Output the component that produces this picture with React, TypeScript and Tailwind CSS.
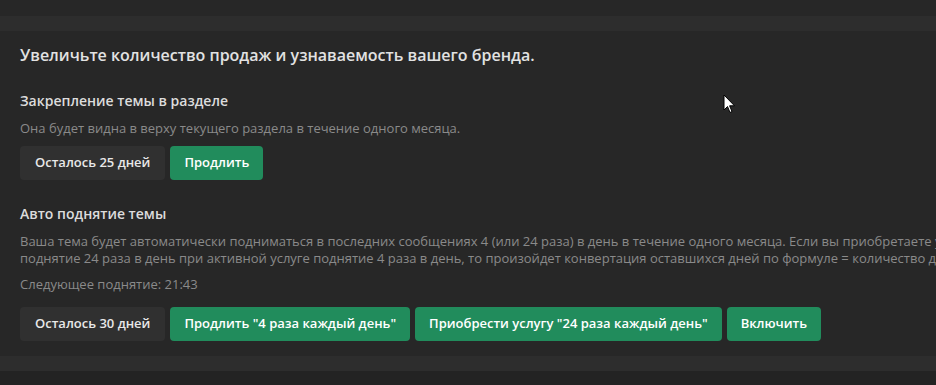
const font = { fontFamily: '"Open Sans", "Noto Sans", sans-serif' };

const GrayBtn = ({ children }: { children: React.ReactNode }) => (
  <div className="h-[34px] px-[15px] flex items-center rounded-[4px] bg-[#303030] text-[13px] font-semibold text-[#e8e8e8] whitespace-nowrap">
    {children}
  </div>
);

const GreenBtn = ({ children }: { children: React.ReactNode }) => (
  <button className="h-[34px] px-[14px] flex items-center rounded-[4px] bg-[#218c5c] text-[13px] font-semibold text-white whitespace-nowrap">
    {children}
  </button>
);

export default function App() {
  return (
    <div className="relative w-[936px] h-[385px] overflow-hidden bg-[#272727]" style={font}>
      <div className="h-[16px]" />
      <div className="h-[15px] bg-[#2d2d2d]" />

      <div className="w-[1200px] px-5 pt-[14px] pb-[15px] bg-[#272727]">
        <h2 className="h-[20px] leading-[20px] text-[16px] font-semibold text-[#e2e2e2]">
          Увеличьте количество продаж и узнаваемость вашего бренда.
        </h2>

        <div className="mt-[26px]">
          <h3 className="h-[20px] leading-[20px] text-[14px] font-semibold text-[#dcdcdc]">
            Закрепление темы в разделе
          </h3>
          <p className="mt-[8px] leading-[18px] text-[13px] text-[#8a8a8a]">
            Она будет видна в верху текущего раздела в течение одного месяца.
          </p>
          <div className="mt-[9px] flex gap-[5px]">
            <GrayBtn>Осталось 25 дней</GrayBtn>
            <GreenBtn>Продлить</GreenBtn>
          </div>
        </div>

        <div className="mt-[24px]">
          <h3 className="h-[20px] leading-[20px] text-[14px] font-semibold text-[#dcdcdc]">
            Авто поднятие темы
          </h3>
          <p className="mt-[9px] leading-[17px] text-[13px] text-[#8a8a8a] whitespace-nowrap">
            Ваша тема будет автоматически подниматься в последних сообщениях 4 (или 24 раза) в день в течение одного месяца. Если вы приобретаете услугу авто
            <br />
            поднятие 24 раза в день при активной услуге поднятие 4 раза в день, то произойдет конвертация оставшихся дней по формуле = количество дней * 4 / 24.
          </p>
          <p className="mt-[8px] leading-[18px] text-[13px] text-[#8a8a8a]">Следующее поднятие: 21:43</p>
          <div className="mt-[14px] flex gap-[5px]">
            <GrayBtn>Осталось 30 дней</GrayBtn>
            <GreenBtn>Продлить "4 раза каждый день"</GreenBtn>
            <GreenBtn>Приобрести услугу "24 раза каждый день"</GreenBtn>
            <GreenBtn>Включить</GreenBtn>
          </div>
        </div>
      </div>

      <div className="h-[15px] bg-[#2d2d2d]" />
      <div className="h-[20px] bg-[#232323]" />

      {/* mouse pointer */}
      <svg className="absolute left-[723px] top-[94px]" width="14" height="20" viewBox="0 0 14 20">
        <path d="M1 1 L1 16 L4.5 12.5 L7 18.5 L9 17.5 L6.6 11.8 L11.5 11.8 Z" fill="#fff" stroke="#000" strokeWidth="1" strokeLinejoin="round" />
      </svg>
    </div>
  );
}
